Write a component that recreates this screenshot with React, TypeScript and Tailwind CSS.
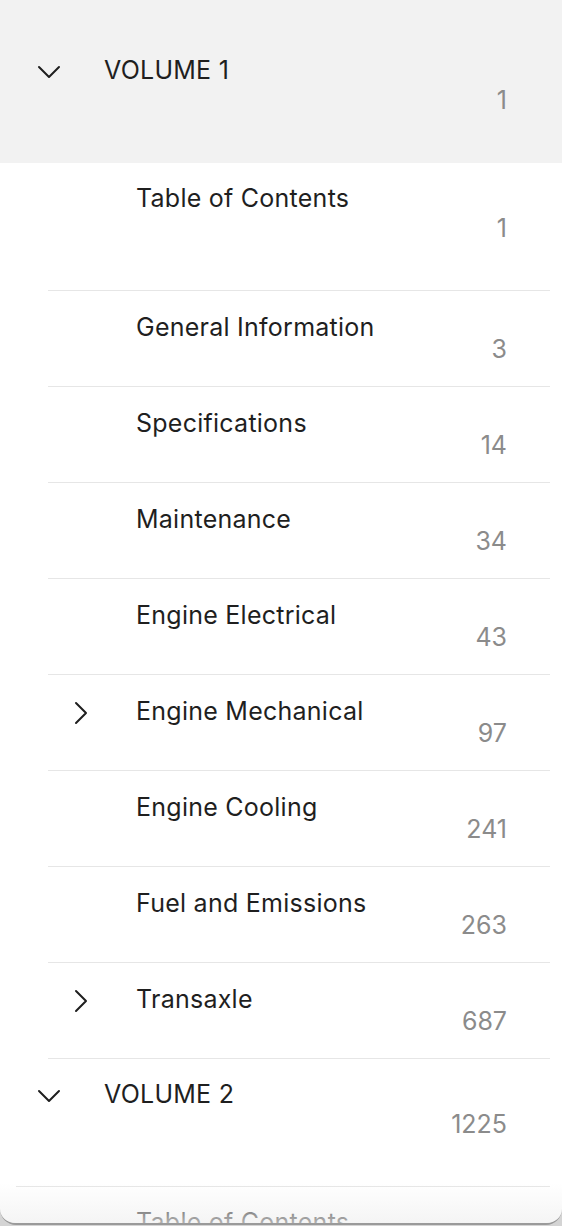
const font = { fontFamily: '"Inter", "Liberation Sans", sans-serif' };

type Entry = {
  title: string;
  page: number;
  chevron?: "down" | "right";
  tall?: boolean;
};

const volume1: Entry[] = [
  { title: "Table of Contents", page: 1, tall: true },
  { title: "General Information", page: 3 },
  { title: "Specifications", page: 14 },
  { title: "Maintenance", page: 34 },
  { title: "Engine Electrical", page: 43 },
  { title: "Engine Mechanical", page: 97, chevron: "right" },
  { title: "Engine Cooling", page: 241 },
  { title: "Fuel and Emissions", page: 263 },
  { title: "Transaxle", page: 687, chevron: "right" },
];

const Chevron = ({ dir }: { dir: "down" | "right" }) =>
  dir === "down" ? (
    <svg width="24" height="14" viewBox="0 0 24 14" fill="none">
      <path d="M2 2 L12 12 L22 2" stroke="#1f1f1f" strokeWidth="2" strokeLinecap="round" strokeLinejoin="round" />
    </svg>
  ) : (
    <svg width="14" height="24" viewBox="0 0 14 24" fill="none">
      <path d="M2 2 L12 12 L2 22" stroke="#1f1f1f" strokeWidth="2" strokeLinecap="round" strokeLinejoin="round" />
    </svg>
  );

const Row = ({
  entry,
  volume,
  last,
}: {
  entry: Entry;
  volume?: boolean;
  last?: boolean;
}) => (
  <div
    className={`flex mr-[12px] ${volume ? "ml-[16px]" : "ml-[48px]"} ${
      entry.tall ? "h-[128px] pt-[19px]" : "h-[96px] pt-[20px]"
    } ${last ? "" : "border-b border-[#e6e6e6]"}`}
  >
    <div className="w-[65px] h-[32px] flex items-center justify-center shrink-0 mt-[2px]">
      {entry.chevron && <Chevron dir={entry.chevron} />}
    </div>
    <div className="flex-1 ml-[23px] text-[25px] tracking-[0.01em] leading-[32px] text-[#1f1f1f]">
      {entry.title}
    </div>
    <div
      className={`pr-[43px] text-[25px] leading-[32px] text-[#8b8b8b] ${
        entry.tall ? "mt-[30px]" : "mt-[22px]"
      }`}
    >
      {entry.page}
    </div>
  </div>
);

export default function App() {
  return (
    <div className="w-[562px] h-[1226px] bg-[#d4d4d4] overflow-hidden" style={font}>
      <div className="relative h-[1225px] bg-white rounded-b-[16px] overflow-hidden border-b-[2px] border-[#9a9a9a]">
        <div className="bg-[#f2f2f2] pt-[35px]">
          <Row
            entry={{ title: "VOLUME 1", page: 1, chevron: "down", tall: true }}
            volume
            last
          />
        </div>
        {volume1.map((e) => (
          <Row key={e.title} entry={e} />
        ))}
        <Row
          entry={{ title: "VOLUME 2", page: 1225, chevron: "down", tall: true }}
          volume
        />
        <Row entry={{ title: "Table of Contents", page: 1225, tall: true }} />
        <div className="pointer-events-none absolute left-0 right-0 bottom-0 h-[40px] bg-gradient-to-b from-transparent to-[#f0f0f0]/70" />
      </div>
    </div>
  );
}
